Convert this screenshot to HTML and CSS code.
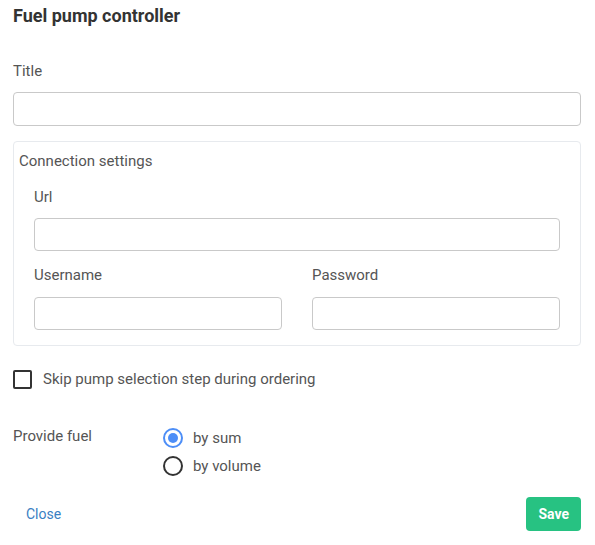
FILE: index.html
```html
<!DOCTYPE html>
<html lang="en">
<head>
<meta charset="utf-8">
<title>Fuel pump controller</title>
<link rel="stylesheet" href="styles.css">
</head>
<body>
<div class="dialog">
  <h1 class="heading">Fuel pump controller</h1>

  <div class="field">
    <label class="label">Title</label>
    <input class="input" type="text">
  </div>

  <div class="group">
    <div class="legend">Connection settings</div>
    <div class="group-body">
      <div class="field">
        <label class="label label-url">Url</label>
        <input class="input input-sm" type="text">
      </div>
      <div class="cols">
        <div class="field">
          <label class="label label-col">Username</label>
          <input class="input input-sm input-col" type="text">
        </div>
        <div class="field">
          <label class="label label-col">Password</label>
          <input class="input input-sm input-col" type="password">
        </div>
      </div>
    </div>
  </div>

  <label class="check">
    <span class="check-box"></span>
    <span class="check-text">Skip pump selection step during ordering</span>
  </label>

  <div class="choice">
    <div class="choice-label">Provide fuel</div>
    <div class="radios">
      <label class="radio">
        <span class="radio-dot is-on"></span>
        <span class="radio-text">by sum</span>
      </label>
      <label class="radio">
        <span class="radio-dot"></span>
        <span class="radio-text">by volume</span>
      </label>
    </div>
  </div>

  <div class="footer">
    <button class="btn btn-link" type="button">Close</button>
    <button class="btn btn-save" type="button">Save</button>
  </div>
</div>
</body>
</html>
```

FILE: styles.css
```css
* { box-sizing: border-box; }

html, body {
  margin: 0;
  padding: 0;
  background: #fff;
}

body {
  font-family: Roboto, "Liberation Sans", Arial, sans-serif;
  font-weight: 400;
  color: #555;
}

.dialog {
  padding: 0 14px 0 13px;
}

.heading {
  margin: 0;
  padding-top: 5px;
  font-size: 18px;
  line-height: 22px;
  font-weight: 700;
  color: #333;
}

.field {
  display: flex;
  flex-direction: column;
}

.label {
  font-size: 15px;
  line-height: 20px;
  font-weight: 400;
  color: #555;
  margin-top: 34px;
}

.input {
  margin-top: 11px;
  height: 34px;
  border: 1px solid #c9c9c9;
  border-radius: 4px;
  padding: 0 10px;
  font: inherit;
  font-size: 14px;
  background: #fff;
  outline: none;
  width: 100%;
}

.input-sm {
  height: 33px;
  margin-top: 11px;
}

.input-col {
  margin-top: 12px;
}

.group {
  margin-top: 15px;
  border: 1px solid #e7eaee;
  border-radius: 4px;
  padding: 9px 0 15px 5px;
}

.legend {
  font-size: 15px;
  line-height: 20px;
  color: #555;
}

.group-body {
  padding: 0 20px 0 15px;
}

.label-url {
  margin-top: 16px;
}

.label-col {
  margin-top: 14px;
}

.cols {
  display: grid;
  grid-template-columns: 1fr 1fr;
  column-gap: 30px;
}

.check {
  margin-top: 23px;
  display: flex;
  align-items: center;
  height: 20px;
}

.check-box {
  width: 19px;
  height: 19px;
  border: 2px solid #333;
  border-radius: 2px;
  flex: none;
}

.check-text {
  margin-left: 11px;
  font-size: 15px;
  line-height: 20px;
}

.choice {
  margin-top: 37px;
  display: grid;
  grid-template-columns: 150px 1fr;
}

.choice-label {
  font-size: 15px;
  line-height: 20px;
}

.radios {
  display: flex;
  flex-direction: column;
  gap: 8px;
  padding-top: 2px;
}

.radio {
  display: flex;
  align-items: center;
  height: 20px;
}

.radio-dot {
  width: 20px;
  height: 20px;
  border: 2px solid #333;
  border-radius: 50%;
  flex: none;
  display: flex;
  align-items: center;
  justify-content: center;
}

.radio-dot.is-on {
  border-color: #4d8ef7;
}

.radio-dot.is-on::after {
  content: "";
  width: 10px;
  height: 10px;
  border-radius: 50%;
  background: #4d8ef7;
}

.radio-text {
  margin-left: 10px;
  font-size: 15px;
  line-height: 20px;
}

.footer {
  margin-top: 21px;
  display: flex;
  justify-content: space-between;
  align-items: center;
}

.btn {
  font-family: Roboto, "Liberation Sans", Arial, sans-serif;
  font-size: 14px;
  line-height: 20px;
  height: 34px;
  padding: 7px 13px;
  border: 0;
  border-radius: 4px;
  background: transparent;
  cursor: pointer;
}

.btn-link {
  color: #3a80c3;
}

.btn-save {
  background: #27c282;
  color: #fff;
  font-weight: 700;
  padding: 7px 12px;
}
```
